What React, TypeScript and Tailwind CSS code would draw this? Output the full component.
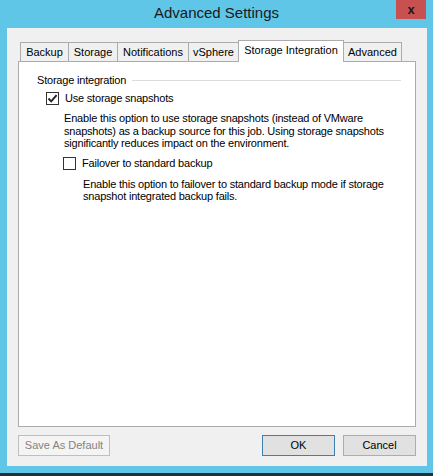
// Advanced Settings dialog (Windows Server 2012 look)
// 433x476 window: cyan frame, gray client area, tab strip, white tab page,
// bottom button row.

const FONT = "font-['Liberation_Sans',Arial,sans-serif]"

type Tab = {label: string; width: string; selected?: boolean; last?: boolean}

const TABS: Tab[] = [
  {label: 'Backup', width: 'w-[48px]'},
  {label: 'Storage', width: 'w-[49px]'},
  {label: 'Notifications', width: 'w-[71px]'},
  {label: 'vSphere', width: 'w-[50px]'},
  {label: 'Storage Integration', width: 'w-[106px]', selected: true},
  {label: 'Advanced', width: 'w-[58px]', last: true},
]

function Checkbox({checked}: {checked?: boolean}) {
  return (
    <span className="flex h-[13px] w-[13px] shrink-0 items-center justify-center border border-[#333333] bg-white">
      {checked && (
        <svg width="11" height="11" viewBox="0 0 11 11" aria-hidden="true">
          <path d="M1.5 5.5 L4.2 8.3 L9.6 2.2" fill="none" stroke="#222" strokeWidth="1.9" />
        </svg>
      )}
    </span>
  )
}

function TabStrip() {
  return (
    <div className="flex h-[21px] items-end pl-[2px]">
      {TABS.map((tab) =>
        tab.selected ? (
          <div
            key={tab.label}
            className={
              tab.width +
              ' relative z-10 -mb-px flex h-[22px] items-center justify-center border border-b-0 border-[#acacac] bg-white pb-[3px] text-black'
            }
          >
            {tab.label}
          </div>
        ) : (
          <div
            key={tab.label}
            className={
              tab.width +
              (tab.last ? ' border-r' : ' border-l') +
              ' flex h-[19px] items-center justify-center border-t border-[#acacac] bg-[#f0f0f0] text-black'
            }
          >
            {tab.label}
          </div>
        ),
      )}
    </div>
  )
}

function StoragePage() {
  return (
    <div className="h-[366px] whitespace-nowrap border border-[#acacac] bg-white pl-[18px] pr-[14px] pt-[12px] leading-[13px] tracking-[-0.2px] text-black">
      <div className="flex items-center gap-[6px]">
        <span>Storage integration</span>
        <span className="h-px flex-1 bg-[#dcdcdc]" />
      </div>

      <div className="mt-[5px] flex items-center gap-[6px] pl-[9px]">
        <Checkbox checked />
        <span>Use storage snapshots</span>
      </div>

      <p className="mt-[7px] pl-[27px] leading-[12.5px]">
        Enable this option to use storage snapshots (instead of VMware
        <br />
        snapshots) as a backup source for this job. Using storage snapshots
        <br />
        significantly reduces impact on the environment.
      </p>

      <div className="mt-[7px] flex items-center gap-[6px] pl-[26px]">
        <Checkbox />
        <span>Failover to standard backup</span>
      </div>

      <p className="mt-[8px] pl-[46px] leading-[12px]">
        Enable this option to failover to standard backup mode if storage
        <br />
        snapshot integrated backup fails.
      </p>
    </div>
  )
}

export default function App() {
  return (
    <div className={FONT + ' flex h-[476px] w-[433px] flex-col bg-[#5fc6e8] text-[11px]'}>
      <div className="relative flex h-[28px] shrink-0 items-center justify-center">
        <span className="pb-[2px] text-[15px] text-[#1a1a1a]">Advanced Settings</span>
        <button className="absolute right-[7px] top-0 flex h-[19px] w-[30px] items-center justify-center bg-[#c75050] text-[13px] font-bold leading-none text-[#1a1a1a]">
          x
        </button>
      </div>

      <div className="ml-[7px] mr-[6px] flex h-[438px] shrink-0 flex-col bg-[#f0f0f0] px-[11px] pt-[12px]">
        <TabStrip />
        <StoragePage />

        <div className="mt-[8px] flex items-center">
          <button
            disabled
            className="h-[21px] w-[92px] border border-[#bfbfbf] bg-[#f4f4f4] text-[11px] text-[#838383]"
          >
            Save As Default
          </button>
          <button className="ml-auto h-[21px] w-[73px] border border-[#3c7fb1] bg-[#e1e1e1] text-[11px] text-black">
            OK
          </button>
          <button className="ml-[8px] h-[21px] w-[73px] border border-[#adadad] bg-[#e1e1e1] text-[11px] text-black">
            Cancel
          </button>
        </div>
      </div>

      <div className="mt-auto h-[3px] bg-[#22303a]" />
    </div>
  )
}
